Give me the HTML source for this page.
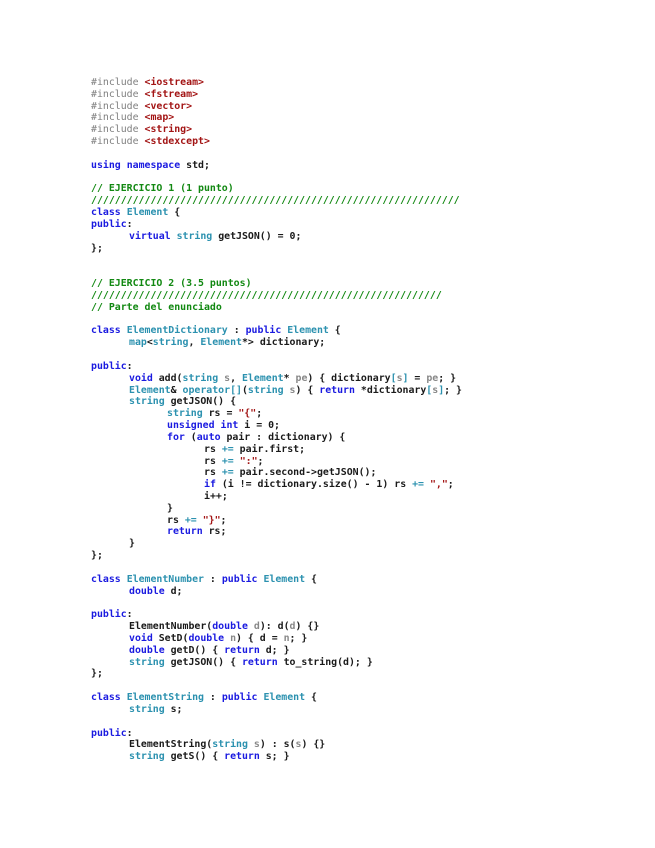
<!DOCTYPE html>
<html><head><meta charset="utf-8"><style>
html,body{margin:0;background:#fff;}
body{width:655px;height:848px;position:relative;overflow:hidden;}
#c{position:absolute;left:91px;top:77px;font-family:"DejaVu Sans Mono","Liberation Mono",monospace;font-size:9.9px;line-height:11.84px;color:#1a1a1a;font-weight:bold;}
#c div{height:11.84px;white-space:pre;}
.i1{padding-left:38px}.i2{padding-left:76px}.i3{padding-left:113px}
.p{color:#808080;font-weight:normal}.r{color:#a31515}.k{color:#1a1ae0}.t{color:#2b91af}.g{color:#118811}.m{color:#888}.o{color:#2b91af}
</style></head><body><div id="c">
<div><span class="p">#include</span> <span class="r">&lt;iostream&gt;</span></div>
<div><span class="p">#include</span> <span class="r">&lt;fstream&gt;</span></div>
<div><span class="p">#include</span> <span class="r">&lt;vector&gt;</span></div>
<div><span class="p">#include</span> <span class="r">&lt;map&gt;</span></div>
<div><span class="p">#include</span> <span class="r">&lt;string&gt;</span></div>
<div><span class="p">#include</span> <span class="r">&lt;stdexcept&gt;</span></div>
<div></div>
<div><span class="k">using</span> <span class="k">namespace</span> std;</div>
<div></div>
<div class="g">// EJERCICIO 1 (1 punto)</div>
<div class="g">//////////////////////////////////////////////////////////////</div>
<div><span class="k">class</span> <span class="t">Element</span> {</div>
<div><span class="k">public</span>:</div>
<div class="i1"><span class="k">virtual</span> <span class="t">string</span> getJSON() = 0;</div>
<div>};</div>
<div></div>
<div></div>
<div class="g">// EJERCICIO 2 (3.5 puntos)</div>
<div class="g">///////////////////////////////////////////////////////////</div>
<div class="g">// Parte del enunciado</div>
<div></div>
<div><span class="k">class</span> <span class="t">ElementDictionary</span> : <span class="k">public</span> <span class="t">Element</span> {</div>
<div class="i1"><span class="t">map</span>&lt;<span class="t">string</span>, <span class="t">Element</span>*&gt; dictionary;</div>
<div></div>
<div><span class="k">public</span>:</div>
<div class="i1"><span class="k">void</span> add(<span class="t">string</span> <span class="m">s</span>, <span class="t">Element</span>* <span class="m">pe</span>) { dictionary<span class="o">[</span><span class="m">s</span><span class="o">]</span> = <span class="m">pe</span>; }</div>
<div class="i1"><span class="t">Element</span>&amp; <span class="t">operator[]</span>(<span class="t">string</span> <span class="m">s</span>) { <span class="k">return</span> *dictionary<span class="o">[</span><span class="m">s</span><span class="o">]</span>; }</div>
<div class="i1"><span class="t">string</span> getJSON() {</div>
<div class="i2"><span class="t">string</span> rs = <span class="r">"{"</span>;</div>
<div class="i2"><span class="k">unsigned</span> <span class="k">int</span> i = 0;</div>
<div class="i2"><span class="k">for</span> (<span class="k">auto</span> pair : dictionary) {</div>
<div class="i3">rs <span class="o">+=</span> pair.first;</div>
<div class="i3">rs <span class="o">+=</span> <span class="r">":"</span>;</div>
<div class="i3">rs <span class="o">+=</span> pair.second-&gt;getJSON();</div>
<div class="i3"><span class="k">if</span> (i != dictionary.size() - 1) rs <span class="o">+=</span> <span class="r">","</span>;</div>
<div class="i3">i++;</div>
<div class="i2">}</div>
<div class="i2">rs <span class="o">+=</span> <span class="r">"}"</span>;</div>
<div class="i2"><span class="k">return</span> rs;</div>
<div class="i1">}</div>
<div>};</div>
<div></div>
<div><span class="k">class</span> <span class="t">ElementNumber</span> : <span class="k">public</span> <span class="t">Element</span> {</div>
<div class="i1"><span class="k">double</span> d;</div>
<div></div>
<div><span class="k">public</span>:</div>
<div class="i1">ElementNumber(<span class="k">double</span> <span class="m">d</span>): d(<span class="m">d</span>) {}</div>
<div class="i1"><span class="k">void</span> SetD(<span class="k">double</span> <span class="m">n</span>) { d = <span class="m">n</span>; }</div>
<div class="i1"><span class="k">double</span> getD() { <span class="k">return</span> d; }</div>
<div class="i1"><span class="t">string</span> getJSON() { <span class="k">return</span> to_string(d); }</div>
<div>};</div>
<div></div>
<div><span class="k">class</span> <span class="t">ElementString</span> : <span class="k">public</span> <span class="t">Element</span> {</div>
<div class="i1"><span class="t">string</span> s;</div>
<div></div>
<div><span class="k">public</span>:</div>
<div class="i1">ElementString(<span class="t">string</span> <span class="m">s</span>) : s(<span class="m">s</span>) {}</div>
<div class="i1"><span class="t">string</span> getS() { <span class="k">return</span> s; }</div>
</div></body></html>
